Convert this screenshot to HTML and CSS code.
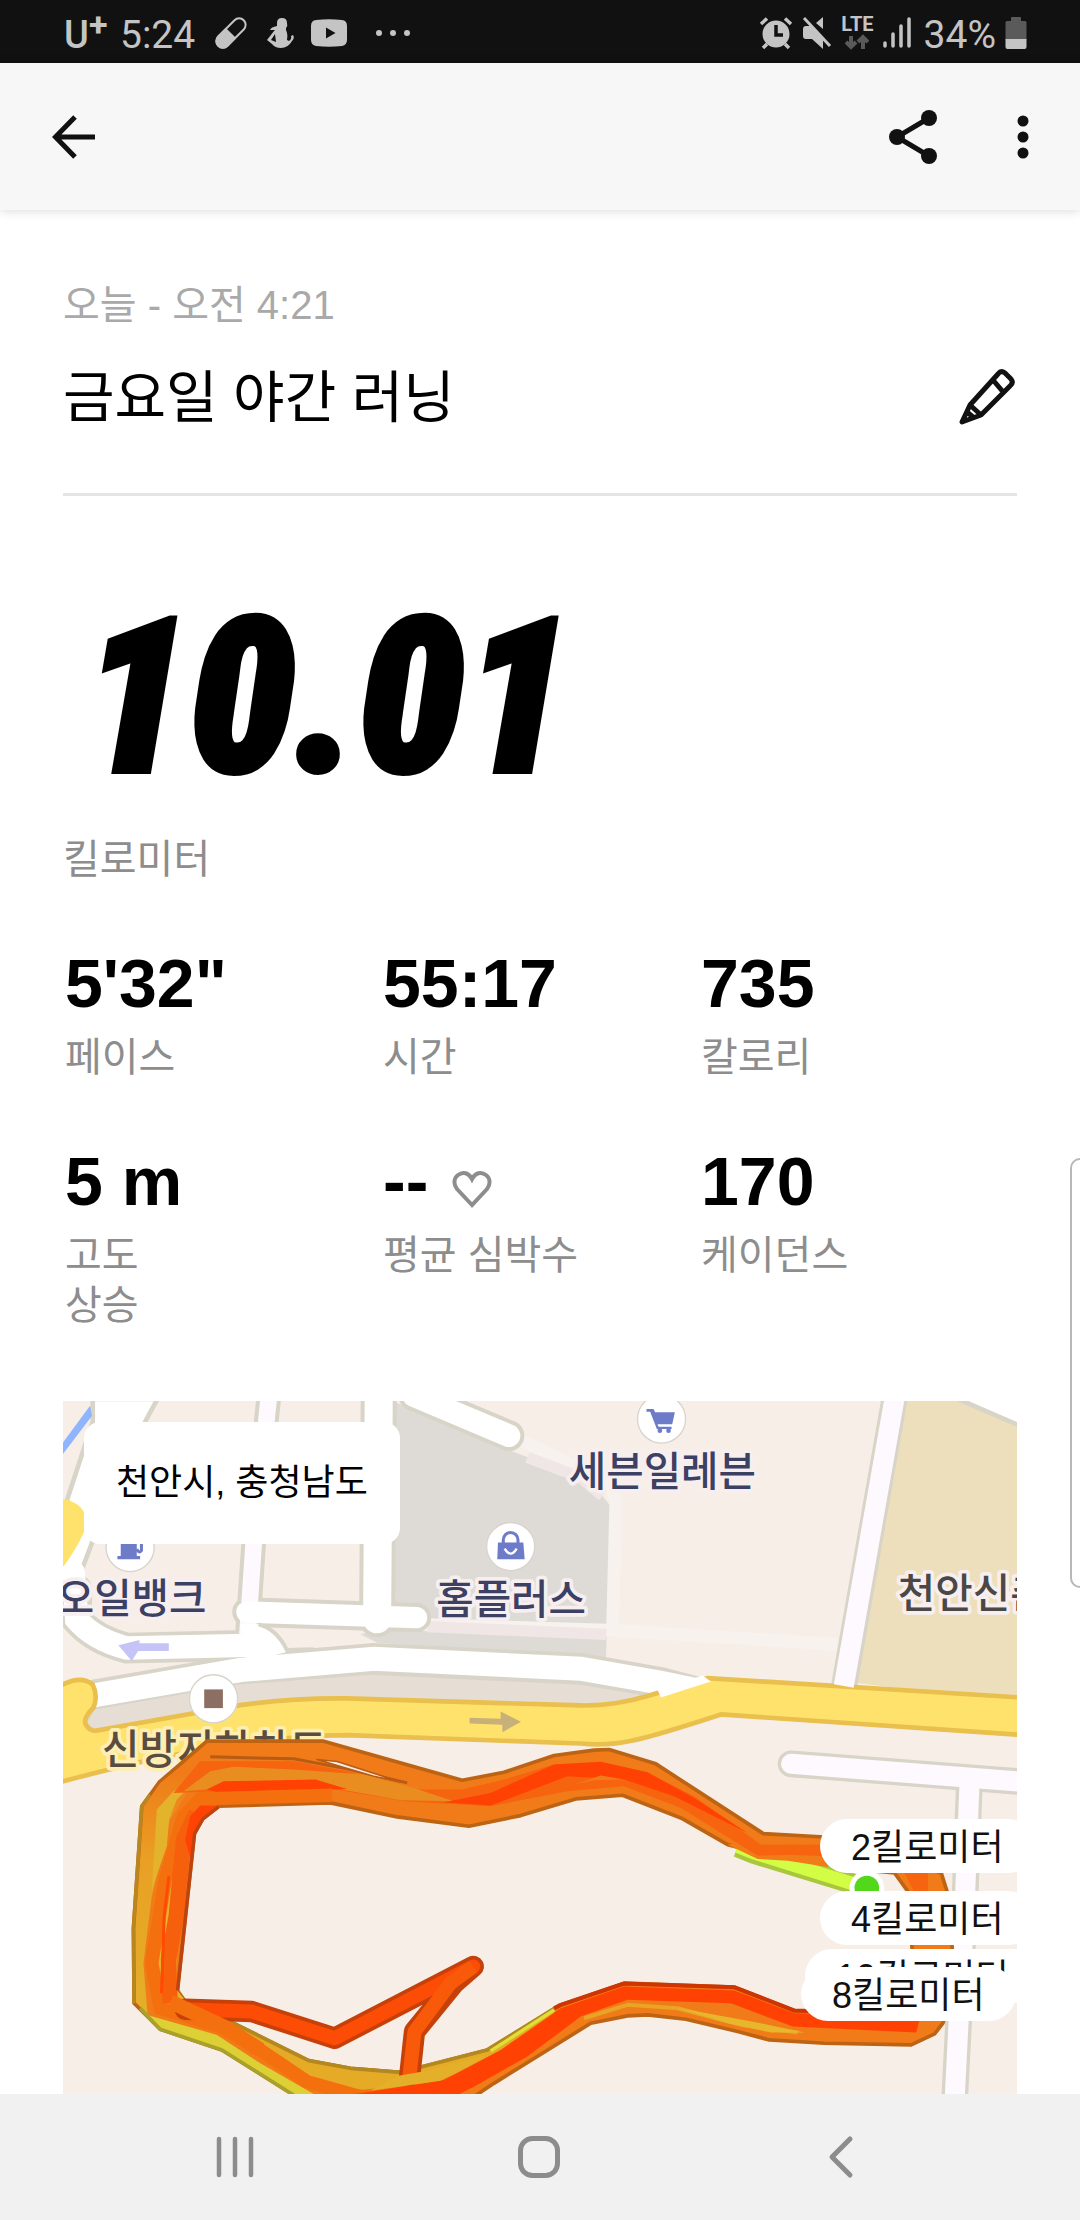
FILE: index.html
```html
<!DOCTYPE html>
<html lang="ko">
<head>
<meta charset="utf-8">
<meta name="viewport" content="width=device-width, initial-scale=1">
<title>금요일 야간 러닝</title>
<link rel="stylesheet" href="styles.css">
</head>
<body>
<div class="screen">
  <div class="status">
    <div class="status-group">
      <span class="carrier">U<sup>+</sup></span>
      <span class="clock">5:24</span>
      <svg class="ico-pill" width="32" height="32" viewBox="0 0 32 32"><g transform="rotate(-45 16 16)"><rect x="-2" y="9.500" width="36" height="13" rx="6.500" fill="none" stroke="#c4c4c4" stroke-width="2"/><path d="M16 8.500H4.500a7.500 7.500 0 0 0 0 15H16z" fill="#c4c4c4"/></g></svg>
      <svg class="ico-bird" width="28" height="32" viewBox="0 0 28 32" fill="#c4c4c4"><path fill-rule="evenodd" d="M10 6Q10 1 15 1t5 5q1 3-1 5v2q2 4 1 10l2 1q3-2 2-5l2-1q2 3-1 6-4 7-11 7-6 0-9-4L0 23l7-9 1-1-5 0q1-3 7-4zM8 17l-4 6 5 2z"/></svg>
      <svg class="ico-video" width="38" height="28" viewBox="0 0 38 28"><path d="M6 1q13-1.500 26 0 5 .5 5 6v14q0 5-5 6-13 1.500-26 0-5-1-5-6V7q0-5.500 5-6z" fill="#c4c4c4"/><path d="M16 8.500v11l9.500-5.500z" fill="#111"/></svg>
      <svg class="ico-more" width="36" height="8" viewBox="0 0 36 8" fill="#c4c4c4"><circle cx="4" cy="4" r="3"/><circle cx="18" cy="4" r="3"/><circle cx="32" cy="4" r="3"/></svg>
    </div>
    <div class="status-group right">
      <svg width="34" height="34" viewBox="0 0 34 34"><path d="M2 8l6-5.500M32 8l-6-5.500M8 28l-4 4M26 28l4 4" stroke="#c4c4c4" stroke-width="3.500"/><circle cx="17" cy="18" r="13.500" fill="#c4c4c4"/><path d="M17 9v10h7" fill="none" stroke="#111" stroke-width="3.500"/></svg>
      <svg width="30" height="34" viewBox="0 0 30 34" fill="#c4c4c4"><path d="M1 13q0-3 3-3h5l12 12v11L10 23H4q-3 0-3-3zM14 7l7-6v12z"/><path d="M2 2l26 28" stroke="#c4c4c4" stroke-width="3"/></svg>
      <span class="lte"><span>LTE</span><svg width="24" height="16" viewBox="0 0 24 16" fill="none" stroke="#5a5a5a" stroke-width="4"><path d="M6 2v11M1 8l5 5 5-5M18 15V4M13 8l5-5 5 5"/></svg></span>
      <svg width="28" height="32" viewBox="0 0 28 32" stroke="#c4c4c4" stroke-width="3.500" stroke-linecap="round"><path d="M2 29v-3M10 29V17M18 29V9M26 29V2"/></svg>
      <span class="battery-text">34%</span>
      <svg width="22" height="34" viewBox="0 0 22 34"><path d="M6 5V2q0-1 1-1h8q1 0 1 1v3h4q1.500 0 1.500 1.500V24H.5V6.500Q.5 5 2 5z" fill="#5a5a5a"/><path d="M.5 23h21v8q0 2-2 2h-17q-2 0-2-2z" fill="#c4c4c4"/></svg>
    </div>
  </div>

  <header class="appbar">
    <button type="button" class="icon-btn" aria-label="뒤로"><svg width="44" height="44" viewBox="0 0 44 44" fill="none" stroke="#111" stroke-width="5"><path d="M43 22H5M23 2L3.500 22 23 42"/></svg></button>
    <div class="actions">
      <button type="button" class="icon-btn" aria-label="공유"><svg width="48" height="54" viewBox="0 0 48 54"><path d="M40 8L8 27l32 19" fill="none" stroke="#111" stroke-width="5"/><g fill="#111"><circle cx="40" cy="8" r="8"/><circle cx="8" cy="27" r="8"/><circle cx="40" cy="46" r="8"/></g></svg></button>
      <button type="button" class="icon-btn" aria-label="더보기"><svg width="12" height="44" viewBox="0 0 12 44" fill="#111"><circle cx="6" cy="6" r="5.500"/><circle cx="6" cy="22" r="5.500"/><circle cx="6" cy="38" r="5.500"/></svg></button>
    </div>
  </header>

  <main class="content">
    <section class="heading">
      <div>
        <p class="date">오늘 - 오전 4:21</p>
        <h1>금요일 야간 러닝</h1>
      </div>
      <button type="button" class="icon-btn edit" aria-label="이름 수정"><svg width="58" height="56" viewBox="0 0 58 56" fill="none" stroke="#111" stroke-width="5" stroke-linejoin="round"><path d="M3 53L11 36 39 5q3-4 7-1l6 6q3 4-1 7L22 46zM34 11l11 13M11 36l11 10M8 43l6 5"/></svg></button>
    </section>

    <section class="distance">
      <p class="distance-value">10.01</p>
      <p class="label">킬로미터</p>
    </section>

    <dl class="stats">
      <div><dd>5'32"</dd><dt>페이스</dt></div>
      <div><dd>55:17</dd><dt>시간</dt></div>
      <div><dd>735</dd><dt>칼로리</dt></div>
      <div><dd>5 m</dd><dt>고도<br>상승</dt></div>
      <div><dd>-- <svg class="heart" width="40" height="38" viewBox="0 0 40 38"><path d="M20 35L5 19C1 14 2 8 6 5c5-4 11-2 14 4 3-6 9-8 14-4 4 3 5 9 1 14z" fill="none" stroke="#8d8d8d" stroke-width="4"/></svg></dd><dt>평균 심박수</dt></div>
      <div><dd>170</dd><dt>케이던스</dt></div>
    </dl>

    <section class="map" aria-label="경로 지도">
      <svg class="map-canvas" viewBox="9 36 2862 2076" preserveAspectRatio="xMinYMin slice">
        <defs>
          <linearGradient id="left" x1="0" y1="0" x2="0" y2="1"><stop offset="0" stop-color="#f07a18"/><stop offset=".35" stop-color="#e9a024"/><stop offset="1" stop-color="#e3b029"/></linearGradient>
        </defs>
        <rect x="9" y="36" width="2862" height="2076" fill="#f7eee8"/>

        <!-- parcels -->
        <path d="M1005 40L1350 185 1560 265 1625 320 1648 350 1635 830 1500 800 950 760 900 735 1100 690 1000 640z" fill="#dedbd6"/>
        <path d="M1370 150L1625 270Q1660 290 1665 340L1655 730M1070 705L1640 722 2330 765" fill="none" stroke="#f7f2ee" stroke-width="38"/>
        <path d="M1400 205L1560 265 1625 320M1100 712L1636 735" fill="none" stroke="#efe6e5" stroke-width="34"/>
        <path d="M2535 36H2690L2871 110V940L2380 880z" fill="#eedfbc"/>
        <path d="M2690 30L2880 112V30z" fill="#fff"/><path d="M2690 30L2880 112" stroke="#d8d4c8" stroke-width="14"/>

        <!-- minor roads, casing first -->
        <g fill="none" stroke="#d8d4c8" stroke-linecap="round">
          <path d="M628 0L580 465 560 760" stroke-width="74"/>
          <path d="M955 0L950 690" stroke-width="108"/>
          <path d="M560 668L1068 685" stroke-width="88"/>
          <path d="M1060 20L1345 140" stroke-width="92"/>
          <path d="M2505 0L2348 895" stroke-width="78" stroke-linecap="butt"/>
          <path d="M2190 1123L2900 1178" stroke-width="80"/>
          <path d="M2725 1160L2712 1500 2680 2130" stroke-width="80" stroke-linecap="butt"/>
          <path d="M50 600L50 690Q100 750 200 776L560 768" stroke-width="92"/>
          <path d="M60 925L540 842 940 808 1560 838 1800 880 1990 930" stroke-width="94" stroke-linecap="butt"/>
        </g>
        <path d="M98 30V98L22 330 0 560 60 610 66 540 100 450 255 98 292 30z" fill="#fff" stroke="#d8d4c8" stroke-width="14"/>
        <path d="M90 50L9 160V195L96 80z" fill="#8fb5ff"/>
        <path d="M9 330Q75 340 80 400 75 440 9 535z" fill="#ffe26b"/>
        <g fill="none" stroke="#fdf9fe" stroke-linecap="round">
          <path d="M628 0L580 465 560 760" stroke-width="50"/>
          <path d="M2190 1123L2900 1178" stroke-width="60"/>
          <path d="M2725 1170L2712 1500 2680 2130" stroke-width="60" stroke-linecap="butt"/>
        </g>
        <g fill="none" stroke="#fff" stroke-linecap="round">
          <path d="M955 0L950 690" stroke-width="84"/>
          <path d="M560 668L1068 685" stroke-width="64"/>
          <path d="M1060 20L1345 140" stroke-width="68"/>
          <path d="M40 550L50 690Q100 750 200 776L560 768" stroke-width="70"/>
        </g>
        <path d="M540 705H595Q650 720 690 785L560 820z" fill="#fff"/>
        <path d="M595 705Q650 720 680 782L760 780" fill="none" stroke="#d8d4c8" stroke-width="12"/>

        <!-- main road and median -->
        <path d="M100 955L530 880 930 850 1560 880 1770 915 1700 950 1500 960 860 940 540 960 100 1030 75 1000z" fill="#e6ddd5" stroke="#d8d4c8" stroke-width="12"/>
        <path d="M60 925L540 842 940 808 1560 838 1800 880 1990 920" fill="none" stroke="#fff" stroke-width="72"/>
        <path d="M0 890Q60 855 98 885 115 920 100 955 70 985 76 1002 85 1022 105 1024L380 975 540 947Q700 925 860 927L1560 948Q1660 950 1760 920L1940 866 2890 925V1037L1980 975Q1780 1040 1720 1052 1640 1070 1560 1062L860 1037Q500 1040 0 1178z" fill="#ffe26b" stroke="#e9bf4d" stroke-width="14"/>
        <path d="M1790 900L1925 858 1950 876 1800 924z" fill="#fff"/>
        <path d="M2505 0L2348 890" stroke="#fdf9fe" stroke-width="60"/>

        <path d="M326 762H238V752L175 768 215 815 234 785H326z" fill="#c6c4f6"/>
        <path d="M1227 985L1320 988V966L1381 997 1325 1028V1006L1227 1002z" fill="#c8b179"/>

        <!-- places -->
        <g fill="#fff" stroke="#d9d3cd" stroke-width="4"><circle cx="1802" cy="90" r="72"/><circle cx="1350" cy="472" r="72"/><circle cx="210" cy="475" r="72"/><circle cx="460" cy="928" r="72"/></g>
        <rect x="432" y="900" width="56" height="56" fill="#8d6e63"/>
        <g fill="#6d7bc8">
          <path d="M1757 60H1778L1783 70H1842L1834 106H1790L1793 113H1832V120H1788L1768 68H1757z"/><circle cx="1797" cy="125" r="7"/><circle cx="1823" cy="125" r="7"/>
          <path d="M1312 460H1388L1392 510H1310z"/><path d="M172 510V500H182V420H230V500H240V510z"/>
        </g>
        <path d="M1328 462V452a22 22 0 0 1 44 0V462M230 450h14v34q-8 10-14-4" fill="none" stroke="#6d7bc8" stroke-width="9"/>
        <path d="M1332 478q18 30 36 0" fill="none" stroke="#fff" stroke-width="7"/>
        <g class="place">
          <text x="1524" y="290">세븐일레븐</text>
          <text x="1127" y="675">홈플러스</text>
          <text x="-10" y="672">오일뱅크</text>
          <text x="2510" y="655" class="area">천안신촌</text>
          <text x="126" y="1124" class="station">신방지하차도</text>
        </g>

        <!-- run route -->
        <g transform="translate(0 1020)" stroke-linejoin="round">
          <path d="M222 820L220 595 245 230 297 158 440 35 790 35 1205 152 1330 128 1480 78 1600 62 1645 60 1785 103 2107 312 2290 322 2560 400 2640 430 2662 500 2680 760 2645 880 2620 912 2550 945 2290 940 2125 930 2030 905 1875 868 1760 855 1700 858 1590 880 1300 1060 1150 1160H800L700 1095 485 960 300 898zM352 782L380 822 510 875 745 992 870 1015 1020 1027 1280 960 1500 825 1690 760 2020 772 2200 842 2500 850 2560 760 2540 485 2500 430 2300 410 2180 390 2000 345 1860 265 1685 197 1545 208 1380 258 1225 290 1010 262 810 220 475 230 428 268 403 312z" fill="#f07b18" fill-rule="evenodd" stroke="#bd6414" stroke-width="11"/>
          <path d="M2030 352L2080 372 2420 476" fill="none" stroke="#a8c73c" stroke-width="62"/>
          <path d="M2030 350L2080 370 2420 476" fill="none" stroke="#d3fc45" stroke-width="40"/>
          <path d="M2000 345L2090 388 2180 393 2300 412V350L2107 318z" fill="#f07b18"/>
          <path d="M450 82L700 88 860 118 1040 160" fill="none" stroke="#b85b15" stroke-width="9"/>
          <path d="M770 90L830 96 1020 157 940 140z" fill="#f7eee8" stroke="#b85b15" stroke-width="5"/>
          <path d="M228 818L226 595 251 232 300 160 350 120 420 130 330 270 275 500 250 700 262 850 300 890z" fill="url(#left)"/>
          <path d="M222 820L220 595 245 230 270 195" fill="none" stroke="#b98620" stroke-width="11"/>
          <path d="M290 240L340 185 430 135 400 160 350 210 327 270 320 350 275 480z" fill="#e3b42b"/>
          <path d="M290 690L300 560 345 400 350 780 385 825 480 860 330 830 300 815z" fill="#e6b42b"/>
          <path d="M262 855L300 895 485 957 700 1092H760L600 1000 470 915z" fill="#ddd034"/>
          <path d="M240 835L300 898 485 960 700 1095" fill="none" stroke="#aaa12b" stroke-width="11"/>
          <path d="M480 860L745 992 870 1018 1020 1030 1280 963 1490 832 1460 880 1240 1010 1140 1050 930 1082 790 1065 700 1030 560 930z" fill="#e5ab27"/>
          <path d="M510 875L745 992 870 1015 1020 1027 1280 960 1490 830" fill="none" stroke="#b3891f" stroke-width="11"/>
          <path d="M1290 963L1480 840" stroke="#dfe032" stroke-width="10"/>
          <path d="M340 190L420 95 700 95 860 125 1060 180 1205 180 1330 150 1480 105 1620 98 1760 130 1900 200 2100 345 2290 345V380L2190 375 2090 378 1860 235 1690 170 1520 185 1290 230 1030 215 800 175 400 188z" fill="#f6640f"/>
          <path d="M370 185L450 125 520 112 700 120 910 135 1060 175 1180 215 1020 212 820 175 700 155 490 158 440 180z" fill="#ea8d20"/>
          <path d="M440 180L490 155 765 150 860 178 470 188zM1150 218L1290 190 1480 105 1620 97 1760 128 1900 205 2060 310 1840 200 1690 150 1520 140 1290 228z" fill="#ff4103"/>
          <path d="M1540 165L1620 138 1690 150 1600 152z" fill="#f07c1a"/>
          <path d="M815 197L420 208 370 260 315 450 275 700 300 835 480 890 600 960 740 1055 900 1100 1160 1075 1300 1000" fill="none" stroke="#f4700f" stroke-width="40"/>
          <path d="M408 250L370 330 348 560 325 690 330 820" fill="none" stroke="#f65f0c" stroke-width="46"/>
          <path d="M420 228H475L428 268 403 312 395 400 375 330 390 260z" fill="#ff4304"/>
          <path d="M326 440L312 560 304 790" fill="none" stroke="#ff4a05" stroke-width="9"/>
          <path d="M352 782L403 312 428 268 475 232" fill="none" stroke="#bf4310" stroke-width="10"/>
          <path d="M860 1095L930 1085 1150 1050 1320 960 1500 835 1690 770 2020 782 2200 850 2500 855 2580 850 2565 908 2195 890 2010 820 1700 810 1560 860 1400 980 1240 1070 1160 1110z" fill="#ff4203"/>
          <path d="M1480 835L1500 825 1690 761 2020 772 2200 842 2300 845" fill="none" stroke="#cf3503" stroke-width="12"/>
          <path d="M1570 865L1700 825 1850 835 2040 885 2210 908" fill="none" stroke="#e9a325" stroke-width="12"/>
          <path d="M1840 832L2000 880 2130 908 2230 908 2080 876z" fill="#e7b62c"/>
          <!-- detour inside the loop -->
          <path d="M375 838L575 845 823 925 1238 710 1180 760 1062 905 1048 1035" fill="none" stroke="#c64009" stroke-width="64" stroke-linecap="round"/>
          <path d="M375 838L575 845 823 925 1238 710" fill="none" stroke="#fc4c06" stroke-width="42" stroke-linecap="round"/>
          <path d="M1238 710L1170 760 1062 905 1046 1045" fill="none" stroke="#f85a0a" stroke-width="42" stroke-linejoin="round"/>
          <path d="M330 815L400 848 500 895 600 960" fill="none" stroke="#f4700f" stroke-width="44"/>
          <path d="M930 1082L1010 1038 1100 1022 1280 975 1140 1052z" fill="#e5b029"/>
          <path d="M2530 430H2600V490H2560z" fill="#f6640f"/>
          <circle cx="2417" cy="475" r="52" fill="#fff"/><circle cx="2417" cy="475" r="37" fill="#53d71a"/>
        </g>
      </svg>
      <p class="place-card">천안시, 충청남도</p>
      <span class="km km2">2킬로미터</span>
      <span class="km km4">4킬로미터</span>
      <span class="km km10">10킬로미터</span>
      <span class="km km8">8킬로미터</span>
    </section>
  </main>

  <div class="edge-handle"></div>

  <nav class="sysnav">
    <button type="button" class="icon-btn" aria-label="최근 앱"><svg width="42" height="44" viewBox="0 0 42 44" stroke="#8c8c8c" stroke-width="4.500" stroke-linecap="round"><path d="M4 4v36M20 4v36M36 4v36"/></svg></button>
    <button type="button" class="icon-btn home" aria-label="홈"><svg width="44" height="44" viewBox="0 0 44 44" fill="none" stroke="#8c8c8c" stroke-width="5"><rect x="3.500" y="3.500" width="37" height="37" rx="12"/></svg></button>
    <button type="button" class="icon-btn" aria-label="이전"><svg width="26" height="44" viewBox="0 0 26 44" fill="none" stroke="#8c8c8c" stroke-width="5" stroke-linecap="round" stroke-linejoin="round"><path d="M22 4L4 22l18 18"/></svg></button>
  </nav>
</div>
</body>
</html>
```
FILE: styles.css
```css
* { box-sizing: border-box; margin: 0; padding: 0; }

body {
  background: #fff;
  color: #000;
  font-family: "Liberation Sans", "Noto Sans CJK KR", sans-serif;
}

svg { display: block; flex: none; }

.screen {
  position: relative;
  display: flex;
  flex-direction: column;
  height: 100vh;
  overflow: hidden;
}

.icon-btn { display: block; border: 0; background: none; cursor: pointer; }

/* status bar */
.status {
  flex: none;
  display: flex;
  justify-content: space-between;
  height: 63px;
  padding: 0 53px 0 64px;
  background: #111;
  color: #c4c4c4;
  font-family: Roboto, sans-serif;
  font-size: 39px;
}
.status-group { display: flex; align-items: center; height: 66px; }
.status-group.right { gap: 9px; }
.carrier { width: 56px; padding-top: 4px; font-size: 38px; font-weight: 500; line-height: 50px; white-space: nowrap; }
.carrier sup { font-size: 34px; font-weight: 700; line-height: 1px; vertical-align: 12px; }
.clock { margin-right: 20px; line-height: 50px; padding-top: 3px; }
.ico-bird { margin-left: 20px; }
.ico-video { margin-left: 15px; }
.ico-more { margin-left: 27px; }
.lte { display: flex; flex-direction: column; align-items: center; font-size: 20px; font-weight: 700; line-height: 17px; gap: 1px; }
.battery-text { margin-left: 4px; padding-top: 3px; line-height: 50px; }

/* app bar */
.appbar {
  flex: none;
  display: flex;
  justify-content: space-between;
  align-items: center;
  height: 147px;
  padding: 0 51px 0 52px;
  background: #f7f7f7;
  box-shadow: 0 1px 10px rgba(0, 0, 0, .15);
}
.actions { display: flex; align-items: center; gap: 80px; }

/* run summary */
.content {
  flex: 1;
  min-height: 0;
  display: flex;
  flex-direction: column;
  padding: 66px 63px 0;
}
.heading {
  display: flex;
  justify-content: space-between;
  align-items: flex-end;
  padding-bottom: 54px;
  border-bottom: 3px solid #e5e5e5;
}
.date { color: #a9a9a9; font-size: 40px; line-height: 58px; }
h1 { margin-top: 23px; font-size: 56px; font-weight: 400; line-height: 82px; }
.edit { margin-bottom: 14px; }

.distance-value {
  margin-top: 92px;
  padding-left: 20px;
  font-family: "Roboto Condensed", Roboto, sans-serif;
  font-size: 214px;
  font-style: italic;
  font-weight: 900;
  line-height: 220px;
  -webkit-text-stroke: 6px #000;
}
.label, dt { color: #8d8d8d; font-size: 40px; line-height: 50px; }
.distance .label { margin-top: 26px; }

.stats {
  display: grid;
  grid-template-columns: repeat(3, 1fr);
  row-gap: 48px;
  margin-top: 61px;
}
.stats > div { display: flex; flex-direction: column; min-height: 150px; padding-left: 2px; }
dd { display: flex; align-items: center; gap: 24px; height: 76px; font-size: 68px; font-weight: 700; line-height: 76px; }
dt { margin-top: 11px; }
.heart { margin-top: 16px; }

/* map */
.map { position: relative; flex: 1; min-height: 0; margin-top: 71px; overflow: hidden; background: #f7eee8; }
.map-canvas { width: 100%; height: 100%; }
.place text {
  font-family: "Noto Sans CJK KR", sans-serif;
  font-size: 122px;
  font-weight: 500;
  fill: #3c4063;
  stroke: #f7efef;
  stroke-width: 22px;
  stroke-linejoin: round;
  paint-order: stroke;
}
.place .area { fill: #4a4745; }
.place .station { fill: #5a4c3f; stroke: #fdeeb4; }

.place-card {
  position: absolute;
  left: 21px;
  top: 21px;
  padding: 0 32px;
  border-radius: 16px;
  background: #fff;
  font-size: 36px;
  line-height: 122px;
}
.km {
  position: absolute;
  height: 54px;
  padding: 2px 31px 0;
  border-radius: 27px;
  background: #fff;
  color: #111;
  font-size: 36px;
  line-height: 54px;
  white-space: nowrap;
}
.km2 { left: 757px; top: 418px; }
.km4 { left: 757px; top: 490px; }
.km10 { left: 742px; top: 548px; }
.km8 { left: 738px; top: 566px; }

.edge-handle {
  position: absolute;
  right: -10px;
  top: 1158px;
  width: 20px;
  height: 430px;
  border: 2px solid #b8b8b8;
  border-radius: 16px;
  background: #fff;
}

.sysnav {
  flex: none;
  display: flex;
  justify-content: space-between;
  align-items: center;
  height: 126px;
  padding: 0 226px 0 215px;
  background: #f1f1f1;
}
.home { margin-right: 8px; }
```
